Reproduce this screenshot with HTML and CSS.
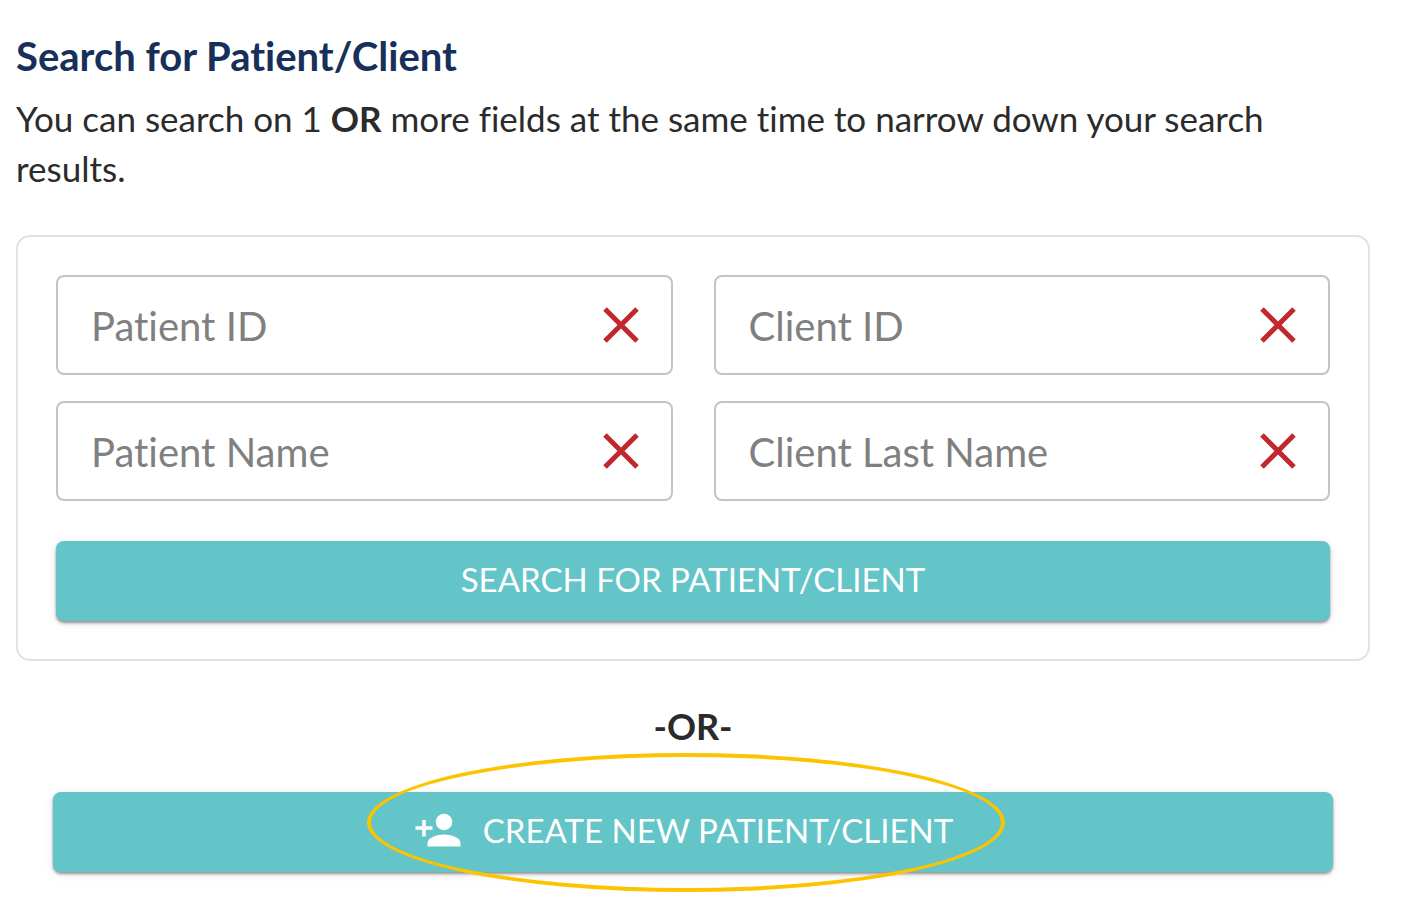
FILE: index.html
```html
<!DOCTYPE html>
<html lang="en">
  <head>
    <meta charset="utf-8">
    <title>Search for Patient/Client</title>
    <link rel="stylesheet" href="styles.css">
  </head>
  <body>
    <main class="page">
      <h1>Search for Patient/Client</h1>
      <p class="intro">You can search on 1 <b>OR</b> more fields at the same time to narrow down your search results.</p>

      <form class="card">
        <div class="fields">
          <div class="field">
            <input type="text" placeholder="Patient ID" aria-label="Patient ID">
            <button type="button" class="clear" aria-label="Clear Patient ID">
              <svg viewBox="0 0 36 36"><path d="M2 2L34 34M34 2L2 34"/></svg>
            </button>
          </div>
          <div class="field">
            <input type="text" placeholder="Client ID" aria-label="Client ID">
            <button type="button" class="clear" aria-label="Clear Client ID">
              <svg viewBox="0 0 36 36"><path d="M2 2L34 34M34 2L2 34"/></svg>
            </button>
          </div>
          <div class="field">
            <input type="text" placeholder="Patient Name" aria-label="Patient Name">
            <button type="button" class="clear" aria-label="Clear Patient Name">
              <svg viewBox="0 0 36 36"><path d="M2 2L34 34M34 2L2 34"/></svg>
            </button>
          </div>
          <div class="field">
            <input type="text" placeholder="Client Last Name" aria-label="Client Last Name">
            <button type="button" class="clear" aria-label="Clear Client Last Name">
              <svg viewBox="0 0 36 36"><path d="M2 2L34 34M34 2L2 34"/></svg>
            </button>
          </div>
        </div>
        <button type="submit" class="btn">SEARCH FOR PATIENT/CLIENT</button>
      </form>

      <p class="or">-OR-</p>

      <div class="create">
        <button type="button" class="btn">
          <svg class="person" viewBox="0 0 46 34">
            <circle cx="29" cy="9" r="8.3"/>
            <path d="M12.5 33.5V30C12.5 24.5 22 21.5 29 21.5S45.5 24.5 45.5 30V33.5Z"/>
            <path d="M7.2 7H10.8V13.2H17.5V16.8H10.8V23.5H7.2V16.8H0.5V13.2H7.2Z"/>
          </svg>
          CREATE NEW PATIENT/CLIENT
        </button>
        <span class="ring"></span>
      </div>
    </main>
  </body>
</html>
```
FILE: styles.css
```css
*{
  box-sizing: border-box;
  margin: 0;
  padding: 0;
}
body{
  background: #fff;
  color: #2b2b2b;
  font-family: Lato, "Liberation Sans", sans-serif;
  font-size: 35px;
  font-variant-ligatures: no-common-ligatures;
}
.page{
  padding: 31px 31px 31px 16px;
}
h1{
  color: #17305a;
  font-size: 40px;
  line-height: 50px;
}
.intro{
  margin-top: 12px;
  line-height: 50px;
}
.card{
  margin-top: 42px;
  padding: 38px;
  border: 2px solid #e2e2e2;
  border-radius: 14px;
}
.fields{
  display: grid;
  grid-template-columns: 1fr 1fr;
  gap: 26px 41px;
}
.field{
  display: flex;
  align-items: center;
  height: 100px;
  padding: 0 32px 0 33px;
  border: 2px solid #c4c4c4;
  border-radius: 8px;
}
.field input{
  flex: 1;
  min-width: 0;
  padding-top: 2px;
  border: none;
  outline: none;
  background: none;
  color: #2b2b2b;
  font: inherit;
  font-size: 40px;
}
.field input::placeholder{
  color: #808080;
  opacity: 1;
}
.clear{
  width: 36px;
  height: 36px;
  border: none;
  background: none;
  cursor: pointer;
}
.clear svg{
  display: block;
  stroke: #c1272d;
  stroke-width: 5;
}
.btn{
  display: flex;
  align-items: center;
  justify-content: center;
  gap: 22px;
  width: 100%;
  height: 80px;
  padding-bottom: 4px;
  border: none;
  border-radius: 8px;
  background: #63c5c8;
  box-shadow: 0 2px 3px rgba(0,0,0,.4), 0 2px 12px rgba(0,0,0,.08);
  color: #fff;
  font: inherit;
  font-size: 33px;
  cursor: pointer;
}
.card .btn{
  margin-top: 40px;
}
.or{
  margin-top: 40px;
  line-height: 50px;
  font-size: 36px;
  font-weight: bold;
  text-align: center;
}
.create{
  position: relative;
  margin: 41px 37px 0;
}
.create .btn{
  padding-right: 18px;
}
.person{
  width: 46px;
  height: 34px;
  fill: #fff;
}
/* highlight around the create button */
.ring{
  position: absolute;
  top: -39px;
  left: calc(50% - 326px);
  width: 638px;
  height: 139px;
  border: 4px solid #fcc400;
  border-radius: 50%;
  pointer-events: none;
}
```
